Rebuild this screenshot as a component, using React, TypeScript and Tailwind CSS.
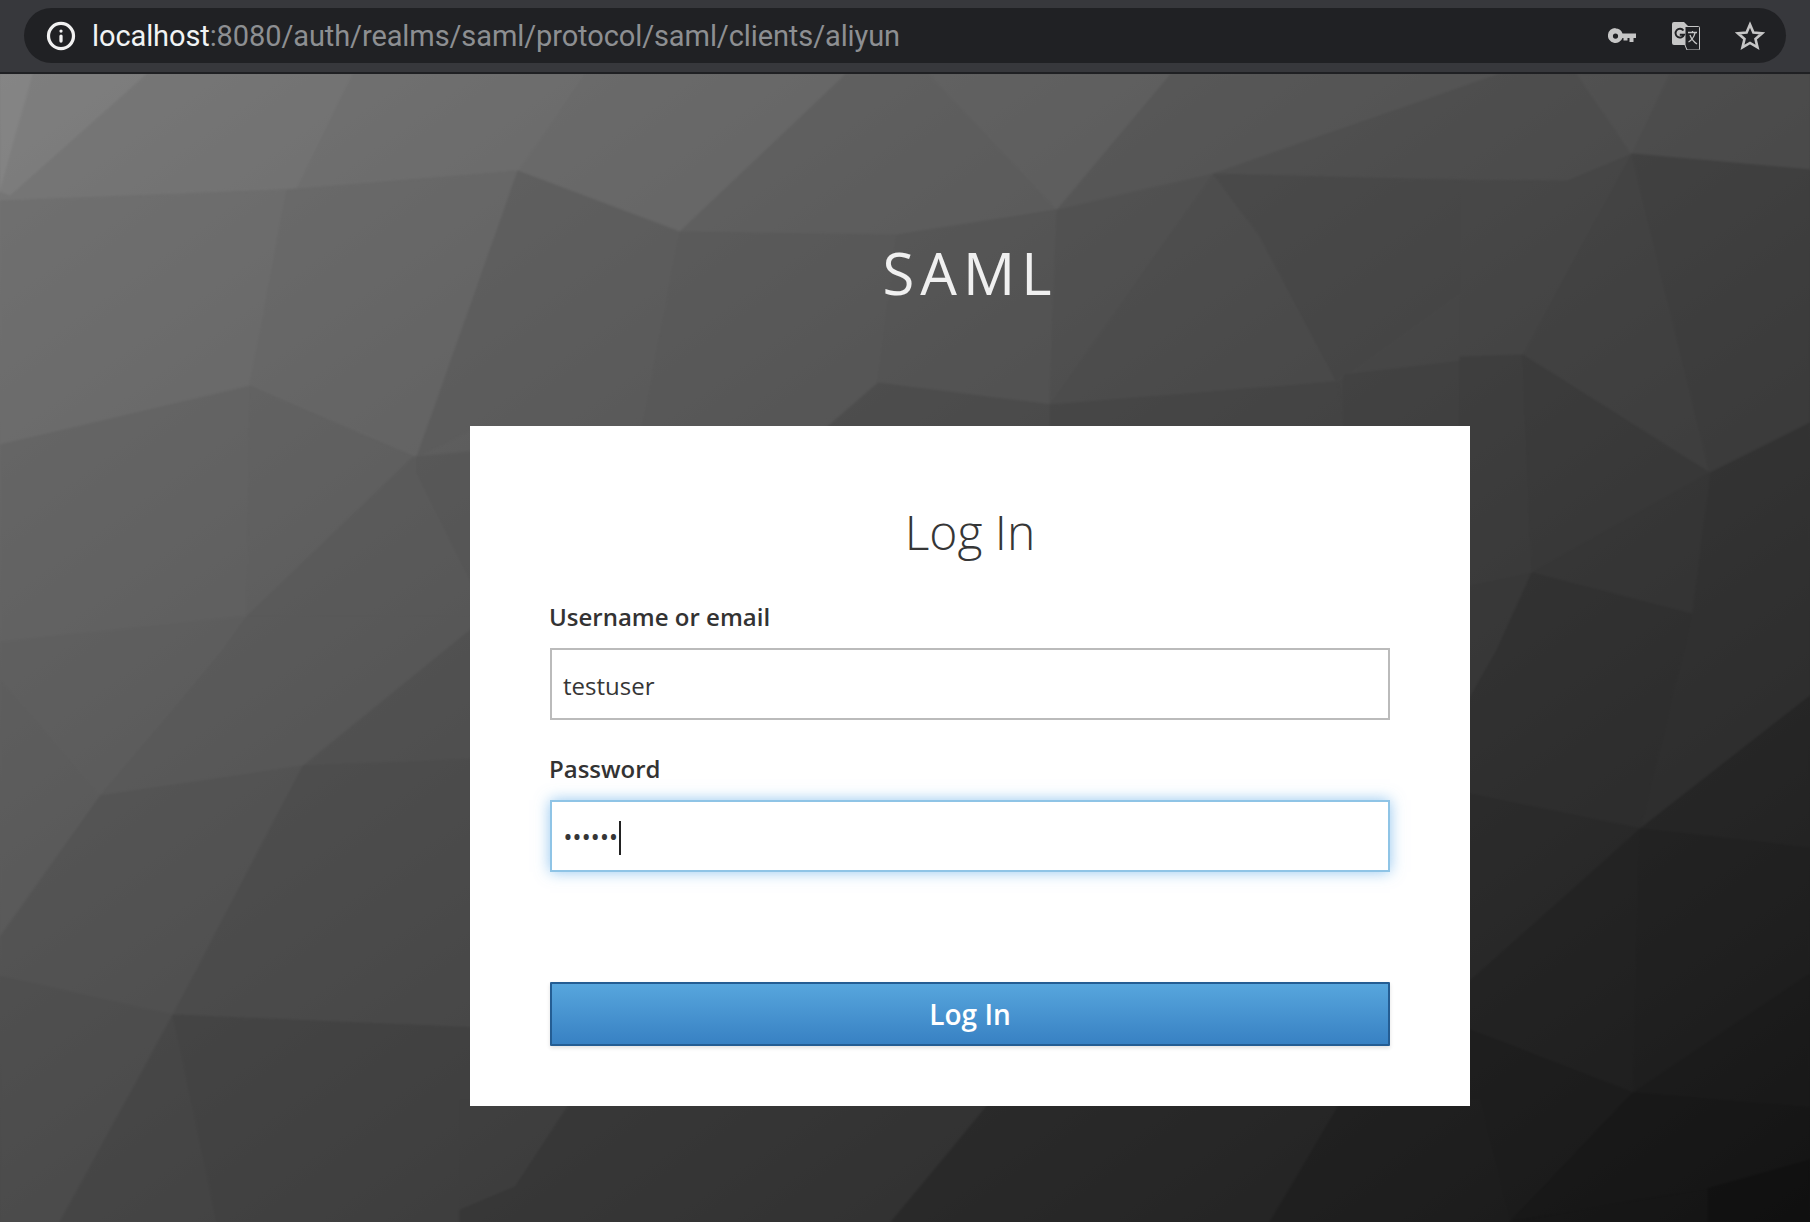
import { Info } from "lucide-react";

// low-poly backdrop, [points, fill] in page coordinates
const polys: [string, string][] = [
  ["0,74 33,74 0,192", "#8a8a8a"],
  ["33,74 147,74 10,196 0,192", "#808080"],
  ["0,192 10,196 0,201", "#757575"],
  ["147,74 353,74 297,188 0,201 10,196", "#757575"],
  ["353,74 585,74 518,171 297,188", "#6f6f6f"],
  ["585,74 846,74 680,232 518,171", "#6b6b6b"],
  ["846,74 929,74 1057,210 897,235 680,232", "#5f5f5f"],
  ["929,74 1171,74 1057,210", "#636363"],
  ["1171,74 1500,74 1213,174 1057,210", "#585858"],
  ["1500,74 1577,74 1632,154 1567,181 1213,174", "#4f4f4f"],
  ["1577,74 1670,74 1632,154", "#555555"],
  ["1670,74 1810,74 1810,170 1632,154", "#505050"],
  ["0,201 287,190 250,386 3,445 0,445", "#6c6c6c"],
  ["287,190 518,171 417,457 250,386", "#676767"],
  ["0,445 250,386 247,616 0,642", "#626262"],
  ["250,386 413,457 247,616", "#606060"],
  ["518,171 680,232 642,430 470,430 417,457", "#5b5b5b"],
  ["413,457 480,451 480,616 247,616", "#595959"],
  ["417,473 480,600 480,451 417,457", "#555555"],
  ["680,232 897,235 878,383 824,430 642,430", "#585858"],
  ["897,235 1057,210 1050,405 878,383", "#555555"],
  ["878,383 1050,405 1050,430 824,430", "#4a4a4a"],
  ["1057,210 1213,174 1050,405", "#505050"],
  ["1213,174 1261,238 1337,382 1050,405", "#4c4c4c"],
  ["1213,174 1470,181 1470,286 1337,382 1261,238", "#464646"],
  ["1050,405 1337,382 1344,430 1050,430", "#444444"],
  ["1337,382 1470,286 1470,360 1344,375", "#484848"],
  ["1344,375 1470,360 1470,430 1344,430", "#414141"],
  ["1460,181 1567,181 1632,154 1523,355 1460,357", "#474747"],
  ["1632,154 1710,473 1523,355", "#434343"],
  ["1632,154 1810,170 1810,423 1710,473", "#3f3f3f"],
  ["1460,357 1523,355 1532,573 1470,588 1460,590", "#3d3d3d"],
  ["1523,355 1710,473 1532,573", "#3a3a3a"],
  ["1710,473 1810,423 1810,696 1640,829 1692,614", "#323232"],
  ["1532,573 1710,473 1692,614", "#373737"],
  ["1460,588 1532,573 1497,650 1460,715", "#3a3a3a"],
  ["1497,650 1532,573 1692,614 1640,829 1460,792 1460,715", "#303030"],
  ["1460,792 1640,829 1460,990", "#2a2a2a"],
  ["1640,829 1810,696 1810,848", "#252525"],
  ["1640,829 1810,848 1810,974 1633,1093", "#202020"],
  ["1460,990 1640,829 1633,1093 1460,1026", "#222222"],
  ["1460,1026 1633,1093 1510,1222 1470,1111", "#1c1c1c"],
  ["1633,1093 1810,974 1810,1108", "#1b1b1b"],
  ["1633,1093 1810,1108 1810,1160 1707,1189 1510,1222", "#171717"],
  ["1707,1189 1810,1160 1810,1222 1707,1222", "#101010"],
  ["1510,1222 1707,1189 1707,1222", "#161616"],
  ["0,642 247,616 223,650 100,796 0,680", "#5e5e5e"],
  ["223,650 247,616 480,616 480,622 303,766 100,796", "#595959"],
  ["480,622 480,759 303,766", "#4f4f4f"],
  ["0,680 100,796 0,937", "#5c5c5c"],
  ["100,796 303,766 173,1015 0,976 0,937", "#525252"],
  ["303,766 480,759 480,1028 173,1015", "#4a4a4a"],
  ["0,976 173,1015 60,1222 0,1222", "#4d4d4d"],
  ["173,1015 217,1222 60,1222", "#444444"],
  ["173,1015 480,1028 480,1222 217,1222", "#404040"],
  ["460,1100 572,1100 515,1187 460,1210", "#3f3f3f"],
  ["460,1210 515,1187 572,1100 992,1100 891,1222 460,1222", "#353535"],
  ["992,1100 1342,1100 1270,1222 891,1222", "#272727"],
  ["1342,1100 1480,1100 1510,1222 1270,1222", "#1e1e1e"],
];

function KeyIcon() {
  return (
    <svg width="28" height="16" viewBox="0 0 28 16" className="shrink-0">
      <path
        fillRule="evenodd"
        d="M7.5 0.5a7.5 7.5 0 0 1 7 5H28v4.5h-2.5v4h-4v-4h-2v2.5h-4v-2.5h-1a7.5 7.5 0 1 1-7-10Zm0 5a2.6 2.6 0 1 0 0 5.2 2.6 2.6 0 0 0 0-5.2Z"
        fill="#c6c6c6"
      />
    </svg>
  );
}

function TranslateIcon() {
  return (
    <svg width="28" height="28" viewBox="0 0 28 28" className="shrink-0">
      <path d="M2 0h10l5 5v18H2a2 2 0 0 1-2-2V2a2 2 0 0 1 2-2Z" fill="#c6c6c6" />
      <path d="M13 4.5h13.5a1 1 0 0 1 1 1V27a1 1 0 0 1-1 1H15l-2-5Z" fill="#202124" stroke="#c6c6c6" strokeWidth="1" />
      <path
        d="M11.5 8.5a4.4 4.4 0 1 0 .6 4.2H7.8"
        fill="none"
        stroke="#202124"
        strokeWidth="1.9"
      />
      <path d="M16 10.5h9M20.5 9v1.5M23 11c-1 4-4 8-6.5 9M18 13c1 3 4 7 7 9" fill="none" stroke="#c6c6c6" strokeWidth="1.3" />
    </svg>
  );
}

function StarIcon() {
  return (
    <svg width="30" height="30" viewBox="0 0 30 30" className="shrink-0">
      <path
        d="M15 3.6l3.4 8 8.6.7-6.5 5.7 2 8.4L15 21.9l-7.5 4.5 2-8.4L3 12.3l8.6-.7Z"
        fill="none"
        stroke="#c6c6c6"
        strokeWidth="2.6"
        strokeLinejoin="miter"
      />
    </svg>
  );
}

export default function App() {
  return (
    <div className="flex h-[1222px] w-[1810px] flex-col overflow-hidden bg-[#333] font-['Open_Sans',sans-serif]">
      <div className="flex h-[74px] shrink-0 items-start border-b-2 border-[#1f2023] bg-[#37383c] px-[24px] pt-[8px]">
        <div className="flex h-[55px] w-full items-center rounded-full bg-[#202124] pl-[22px] pr-[21px]">
          <Info size={30} strokeWidth={2.6} className="shrink-0 text-[#f1f1f1]" />
          <div className="ml-[16px] mt-[2px] whitespace-nowrap font-['Roboto',sans-serif] text-[29px] tracking-[-0.1px]">
            <span className="text-[#f1f3f4]">localhost</span>
            <span className="text-[#8d8f92]">:8080/auth/realms/saml/protocol/saml/clients/aliyun</span>
          </div>
          <div className="ml-auto flex items-center">
            <KeyIcon />
            <div className="ml-[36px]">
              <TranslateIcon />
            </div>
            <div className="ml-[35px]">
              <StarIcon />
            </div>
          </div>
        </div>
      </div>

      <div className="relative flex flex-1 flex-col items-center pl-[130px]">
        <svg
          className="absolute inset-0"
          width="1810"
          height="1148"
          viewBox="0 74 1810 1148"
        >
          <defs>
            <linearGradient id="bg" gradientUnits="userSpaceOnUse" x1="0" y1="74" x2="1176" y2="1702">
              <stop offset="0" stopColor="#7c7c7c" />
              <stop offset="1" stopColor="#101010" />
            </linearGradient>
          </defs>
          <rect x="0" y="74" width="1810" height="1148" fill="url(#bg)" />
          <g opacity="0.65" className="blur-[0.8px]">
            {polys.map(([points, fill]) => (
              <polygon key={points} points={points} fill={fill} stroke={fill} strokeWidth="1" />
            ))}
          </g>
        </svg>

        <div className="relative h-[352px] pt-[170px] text-[58px] leading-[58px] tracking-[6px] text-[#f0f0f0]">
          SAML
        </div>

        <div className="relative h-[680px] w-[1000px] bg-white px-[80px] pt-[75px]">
          <h1 className="mt-[1px] text-center text-[48px] font-light leading-[59px] text-[#363636]">Log In</h1>

          <label className="mt-[41px] -ml-[1px] block text-[24px] font-semibold leading-[30px] text-[#333]">
            Username or email
          </label>
          <div className="mt-[16px] flex h-[72px] items-center border-2 border-[#bbbbbb] bg-white px-[11px] pt-[3px] text-[24px] text-[#363636]">
            testuser
          </div>

          <label className="mt-[34px] -ml-[1px] block text-[24px] font-semibold leading-[30px] text-[#333]">
            Password
          </label>
          <div className="mt-[16px] flex h-[72px] items-center border-2 border-[#8fc4e6] bg-white px-[12px] pt-[3px] text-[#363636] shadow-[0_0_14px_rgba(102,175,233,0.7)]">
            <span className="text-[21px] font-semibold tracking-[1.2px]">••••••</span>
            <span className="h-[34px] w-[2px] bg-[#222]" />
          </div>

          <button className="mt-[110px] h-[64px] w-full rounded-[1px] border-2 border-[#245d93] bg-gradient-to-b from-[#57a6dd] to-[#3881c3] text-[28px] font-semibold text-white shadow-[0_2px_4px_rgba(0,0,0,0.12)]">
            Log In
          </button>
        </div>
      </div>
    </div>
  );
}
